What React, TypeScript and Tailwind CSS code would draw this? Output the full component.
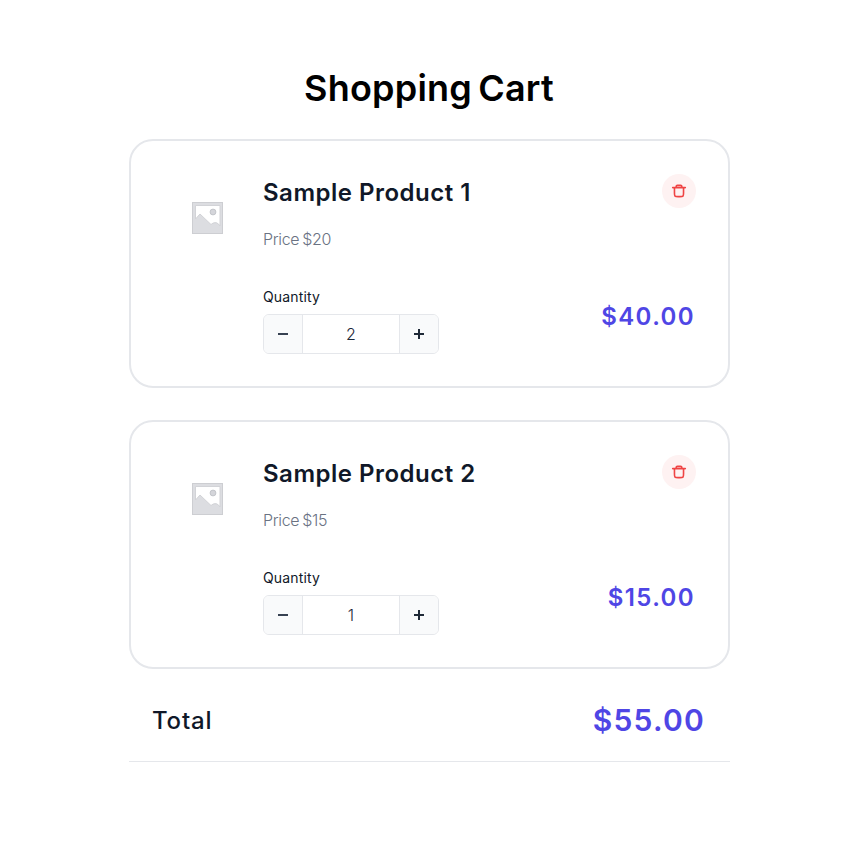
import React from "react";

function Placeholder() {
  return (
    <svg width="31" height="32" viewBox="0 0 31 32" fill="none" aria-hidden="true">
      <rect x="0.5" y="0.5" width="30" height="31" fill="#dcdde1" stroke="#cdced2" />
      <path d="M3.5 3.5H28V24L26.5 22Q23 19 19 22.5L8 12L3.5 17Z" fill="#fff" stroke="#d2d3d7" />
      <circle cx="21" cy="10" r="2.9" fill="#d4d5da" stroke="#c3c5ca" />
    </svg>
  );
}

function RemoveButton({ name }: { name: string }) {
  return (
    <button aria-label={`Remove ${name}`} className="h-[34px] w-[34px] rounded-full">
      <svg width="34" height="34" viewBox="0 0 34 34" fill="none">
        <circle cx="17" cy="17" r="17" fill="#FEF2F2" />
        <path
          d="M14.1673 13.5997V12.5923C14.1673 11.8968 14.7311 11.333 15.4266 11.333H18.5747C19.2702 11.333 19.834 11.8968 19.834 12.5923V13.5997M19.834 13.5997C19.834 13.5997 14.6534 13.5997 11.334 13.5997C6.90804 13.5998 27.0933 13.5998 22.6673 13.5997C21.5608 13.5997 19.834 13.5997 19.834 13.5997ZM12.4673 13.5997H21.534V18.8886C21.534 20.6695 21.534 21.5599 20.9807 22.1131C20.4275 22.6664 19.5371 22.6664 17.7562 22.6664H16.2451C14.4642 22.6664 13.5738 22.6664 13.0206 22.1131C12.4673 21.5599 12.4673 20.6695 12.4673 18.8886V13.5997Z"
          stroke="#EF4444"
          strokeWidth="1.6"
          strokeLinecap="round"
          strokeLinejoin="round"
        />
      </svg>
    </button>
  );
}

function Stepper({ value }: { value: number }) {
  return (
    <div className="flex h-10 w-44 overflow-hidden rounded-md border border-gray-200">
      <button aria-label="Decrease" className="flex w-[39px] items-center justify-center border-r border-gray-200 bg-gray-50">
        <svg width="10" height="10" viewBox="0 0 10 10"><path d="M0 5H10" stroke="#374151" strokeWidth="2" /></svg>
      </button>
      <span className="flex-1 text-center text-base leading-[38px] font-light text-gray-800">{value}</span>
      <button aria-label="Increase" className="flex w-[39px] items-center justify-center border-l border-gray-200 bg-gray-50">
        <svg width="10" height="10" viewBox="0 0 10 10"><path d="M0 5H10M5 0V10" stroke="#1f2937" strokeWidth="2" /></svg>
      </button>
    </div>
  );
}

function CartItem({ name, price, quantity }: { name: string; price: number; quantity: number }) {
  return (
    <article className="flex h-[249px] rounded-3xl border-2 border-gray-200 pt-[33px] pr-8 pl-[61px]">
      <div className="w-[71px] pt-7">
        <Placeholder />
      </div>
      <div className="flex-1">
        <h2 className="pt-px text-2xl leading-9 font-semibold tracking-[0.5px] whitespace-nowrap text-gray-900">{name}</h2>
        <p className="mt-4 text-base leading-6 font-light tracking-[-0.35px] text-gray-500 [word-spacing:-1px]">Price ${price}</p>
        <p className="mt-9 mb-[7px] text-sm leading-5 font-normal tracking-[0.15px] text-gray-900">Quantity</p>
        <Stepper value={quantity} />
      </div>
      <div className="flex flex-col items-end">
        <RemoveButton name={name} />
        <p className="mt-[91px] text-2xl leading-9 font-semibold tracking-[1.4px] text-[#4f46e5] pr-px">
          ${(price * quantity).toFixed(2)}
        </p>
      </div>
    </article>
  );
}

const items = [
  { name: "Sample Product 1", price: 20, quantity: 2 },
  { name: "Sample Product 2", price: 15, quantity: 1 },
];

export default function App() {
  const total = items.reduce((sum, item) => sum + item.price * item.quantity, 0);
  return (
    <main className="min-h-[859px] bg-white pt-[60px] font-['Inter',sans-serif]">
      <div className="ml-[129px] w-[601px]">
        <h1 className="pr-px text-center text-4xl leading-[56px] font-semibold tracking-[0.2px] text-black [word-spacing:-3px]">Shopping Cart</h1>
        <div className="mt-[23px] flex flex-col gap-8">
          {items.map((item) => (
            <CartItem key={item.name} {...item} />
          ))}
        </div>
        <div className="flex h-[93px] items-center justify-between border-b border-gray-200 pt-[11px] pr-[25px] pl-[23px]">
          <p className="text-2xl leading-9 font-medium tracking-[0.8px] text-gray-900">Total</p>
          <p className="pb-0.5 text-[30px] leading-10 font-semibold tracking-[1.25px] text-[#4f46e5]">${total.toFixed(2)}</p>
        </div>
      </div>
    </main>
  );
}
